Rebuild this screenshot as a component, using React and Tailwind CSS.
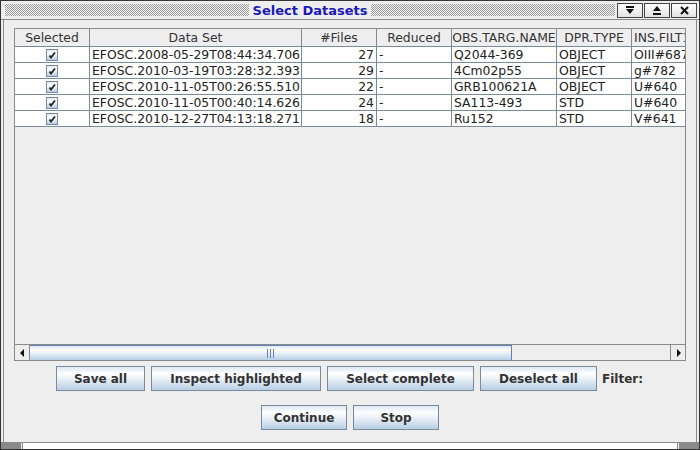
import React from "react";

const columns = [
  { label: "Selected", w: "w-[75px]" },
  { label: "Data Set", w: "w-[212px]" },
  { label: "#Files", w: "w-[75px]" },
  { label: "Reduced", w: "w-[75px]" },
  { label: "OBS.TARG.NAME", w: "w-[105px]" },
  { label: "DPR.TYPE", w: "w-[75px]" },
];

const rows = [
  ["EFOSC.2008-05-29T08:44:34.706", "27", "-", "Q2044-369", "OBJECT", "OIII#687"],
  ["EFOSC.2010-03-19T03:28:32.393", "29", "-", "4Cm02p55", "OBJECT", "g#782"],
  ["EFOSC.2010-11-05T00:26:55.510", "22", "-", "GRB100621A", "OBJECT", "U#640"],
  ["EFOSC.2010-11-05T00:40:14.626", "24", "-", "SA113-493", "STD", "U#640"],
  ["EFOSC.2010-12-27T04:13:18.271", "18", "-", "Ru152", "STD", "V#641"],
];

const bumps =
  "h-[12px] bg-[conic-gradient(#9c9c9c_25%,#f4f4f4_0_50%,#9c9c9c_0_75%,#f4f4f4_0)] bg-[length:2px_2px]";

const ocean = "bg-[linear-gradient(to_bottom,#dde8f3,#ffffff_30%,#b8cfe5)]";

function Btn({ w, children }) {
  return (
    <button
      type="button"
      className={`${w} h-[25px] border border-[#7a8a99] ${ocean} text-[12px] font-bold text-[#333333]`}
    >
      {children}
    </button>
  );
}

function Check() {
  return (
    <div className={`w-[12px] h-[12px] border border-[#7a8a99] ${ocean} flex items-center justify-center`}>
      <svg width="8" height="8" viewBox="0 0 8 8">
        <path d="M1.5 4.5 L3 6.5 L7 1.5" fill="none" stroke="#222" strokeWidth="1.8" />
      </svg>
    </div>
  );
}

function TitleButton({ children }) {
  return (
    <div className="w-[26px] h-[15px] border border-[#444] bg-[linear-gradient(to_bottom,#ffffff,#e2e2e2)] flex items-center justify-center">
      {children}
    </div>
  );
}

export default function App() {
  return (
    <div
      className="w-[700px] h-[450px] bg-[#eeeeee] border border-[#333333] flex flex-col overflow-hidden"
      style={{ fontFamily: '"DejaVu Sans", sans-serif' }}
    >
      {/* title bar */}
      <div className="h-[19px] flex items-center pl-[4px] pr-[2px] border-b border-[#8a8a8a]">
        <div className={`flex-1 ${bumps}`} />
        <div className="px-[4px] text-[13px] font-bold text-[#1a1ab8] leading-none">Select Datasets</div>
        <div className={`flex-1 ${bumps}`} />
        <div className="flex gap-[1px] ml-[2px]">
          <TitleButton>
            <svg width="10" height="9" viewBox="0 0 10 9">
              <rect x="1" y="0" width="8" height="2" fill="#111" />
              <path d="M1 3 H9 L5 8 Z" fill="#111" />
            </svg>
          </TitleButton>
          <TitleButton>
            <svg width="10" height="9" viewBox="0 0 10 9">
              <path d="M1 5 H9 L5 0 Z" fill="#111" />
              <rect x="1" y="7" width="8" height="2" fill="#111" />
            </svg>
          </TitleButton>
          <TitleButton>
            <svg width="9" height="9" viewBox="0 0 9 9">
              <path d="M1 1 L8 8 M8 1 L1 8" stroke="#111" strokeWidth="2" />
            </svg>
          </TitleButton>
        </div>
      </div>

      {/* content */}
      <div className="flex-1 mx-[2px] border-x border-[#8a8a8a] flex flex-col pt-[8px] px-[10px]">
        <div className="h-[333px] border border-[#8a8a8a] flex flex-col">
          <div className="flex-1 overflow-hidden bg-[#eeeeee]">
            <div className="w-[820px] text-[12.4px] text-[#333333]">
              <div className="flex h-[18px] border-b border-[#7a8a99]">
                {columns.map((c) => (
                  <div
                    key={c.label}
                    className={`${c.w} shrink-0 border-r border-[#7a8a99] flex items-center justify-center pt-[2px] whitespace-nowrap overflow-hidden`}
                  >
                    {c.label}
                  </div>
                ))}
                <div className="w-[100px] shrink-0 flex items-center pl-[2px] pt-[2px] whitespace-nowrap">INS.FILT1.NAME</div>
              </div>
              {rows.map((r) => (
                <div key={r[0]} className="flex h-[16px] bg-white border-b border-[#7a8a99] text-[#222222]">
                  <div className="w-[75px] shrink-0 border-r border-[#7a8a99] flex items-center justify-center">
                    <Check />
                  </div>
                  <div className="w-[212px] shrink-0 border-r border-[#7a8a99] pl-[2px] leading-[16px]">{r[0]}</div>
                  <div className="w-[75px] shrink-0 border-r border-[#7a8a99] pr-[2px] text-right leading-[16px]">{r[1]}</div>
                  <div className="w-[75px] shrink-0 border-r border-[#7a8a99] pl-[2px] leading-[16px]">{r[2]}</div>
                  <div className="w-[105px] shrink-0 border-r border-[#7a8a99] pl-[2px] leading-[16px]">{r[3]}</div>
                  <div className="w-[75px] shrink-0 border-r border-[#7a8a99] pl-[2px] leading-[16px]">{r[4]}</div>
                  <div className="w-[100px] shrink-0 pl-[2px] leading-[16px]">{r[5]}</div>
                </div>
              ))}
            </div>
          </div>

          {/* horizontal scrollbar */}
          <div className="h-[16px] flex border-t border-[#8a8a8a] bg-[#eeeeee]">
            <div className="w-[15px] border-r border-[#8a8a8a] flex items-center justify-center">
              <svg width="5" height="8" viewBox="0 0 5 8">
                <path d="M4 0 V8 L0 4 Z" fill="#111" />
              </svg>
            </div>
            <div className="flex-1 flex">
              <div className={`w-[482px] border-t border-r border-[#6382bf] ${ocean} flex items-center justify-center gap-[2px]`}>
                <div className="w-[1px] h-[9px] bg-[#6382bf]" />
                <div className="w-[1px] h-[9px] bg-[#6382bf]" />
                <div className="w-[1px] h-[9px] bg-[#6382bf]" />
              </div>
            </div>
            <div className="w-[15px] border-l border-[#8a8a8a] flex items-center justify-center">
              <svg width="5" height="8" viewBox="0 0 5 8">
                <path d="M1 0 V8 L5 4 Z" fill="#111" />
              </svg>
            </div>
          </div>
        </div>

        <div className="mt-[5px] flex justify-center items-center gap-[6px]">
          <Btn w="w-[89px]">Save all</Btn>
          <Btn w="w-[170px]">Inspect highlighted</Btn>
          <Btn w="w-[147px]">Select complete</Btn>
          <Btn w="w-[117px]">Deselect all</Btn>
          <span className="text-[12px] font-bold text-[#333333] w-[42px] -ml-[1px]">Filter:</span>
        </div>

        <div className="mt-[14px] flex justify-center gap-[6px]">
          <Btn w="w-[86px]">Continue</Btn>
          <Btn w="w-[86px]">Stop</Btn>
        </div>
      </div>

      {/* bottom frame */}
      <div className="h-[7px] border-t border-[#8a8a8a] flex">
        <div className="w-[20px] bg-[#8a8a8a]" />
        <div className="flex-1 border-x border-[#8a8a8a] bg-white mx-[1px]" />
        <div className="w-[20px] bg-[#8a8a8a]" />
      </div>
    </div>
  );
}
